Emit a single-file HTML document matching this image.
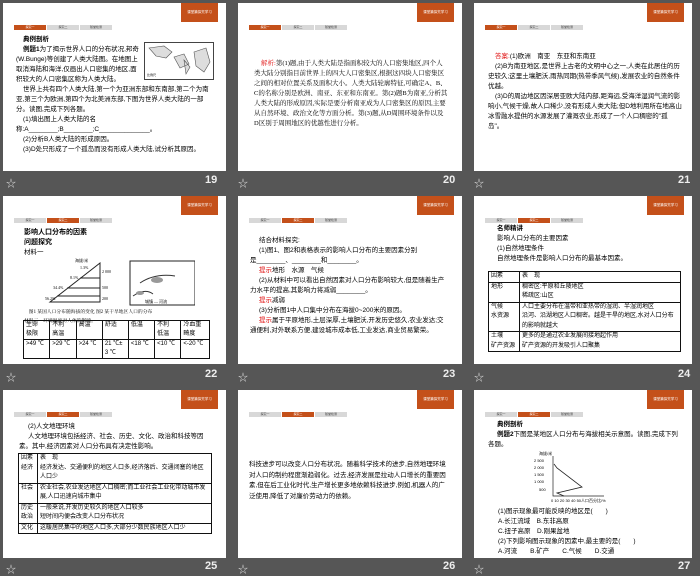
<!DOCTYPE html>
<html><head><meta charset="utf-8">
<style>
*{margin:0;padding:0;box-sizing:border-box}
body{width:700px;height:575px;background:#565656;overflow:hidden;position:relative;font-family:"Liberation Sans","Noto Sans CJK SC",sans-serif}
.s{position:absolute;background:#fff;height:168px;overflow:hidden;color:#000;font-size:6.5px;line-height:10px}
.tag{position:absolute;top:0;right:8px;width:37px;height:19px;background:#c4501a;color:#fff;font-size:3.5px;line-height:19px;text-align:center}
.tabs{position:absolute;top:22px;left:11px;height:5px;display:flex;gap:1px}
.tabs span{width:32px;height:5px;background:#d8d8d8;font-size:3px;line-height:5px;text-align:center;color:#444}
.tabs span.a{background:#c4501a;color:#fff}
.c{position:absolute;left:13px;right:10px}
.r{color:#e01010}
.b{font-weight:bold}
.lb{position:absolute;color:#eee;font-size:11px;font-weight:bold}
.st{position:absolute;color:#ddd;font-size:10px}
table{border-collapse:collapse;font-size:6px;line-height:9px}
td{border:0.8px solid #111;padding:0 2px;vertical-align:top}
table.o{border:1.6px solid #111}
</style></head><body>

<!-- Row 1 -->
<div class="s" style="left:3px;top:3px;width:223px">
<div class="tag">课堂篇探究学习</div>
<div class="tabs"><span class="a">探究一</span><span>探究二</span><span>随堂检测</span></div>
<div class="c" style="top:32px">
<div class="b" style="padding-left:7px">典例剖析</div>
<div style="width:125px;text-indent:7px"><b>例题1</b>为了揭示世界人口的分布状况,邦奇(W.Bunge)等创建了人类大陆图。在地图上取消海陆和海洋,仅画出人口密集的地区,面积较大的人口密集区称为人类大陆。</div>
<div style="text-indent:7px">世界上共有四个人类大陆,第一个为亚洲东部和东南部,第二个为南亚,第三个为欧洲,第四个为北美洲东部,下图为世界人类大陆的一部分。读图,完成下列各题。</div>
<div style="padding-left:7px">(1)填出图上人类大陆的名</div>
<div>称:A________;B________;C______________。</div>
<div style="padding-left:7px">(2)分析B人类大陆的形成原因。</div>
<div style="padding-left:7px">(3)D处只形成了一个孤岛而没有形成人类大陆,试分析其原因。</div>
</div>
<svg style="position:absolute;left:141px;top:39px" width="70" height="38"><rect x="0.5" y="0.5" width="69" height="37" fill="#fff" stroke="#444"/><path d="M5 6 L20 4 L28 10 L22 16 L12 14 Z M30 15 L40 12 L45 22 L36 26 Z M50 10 L62 6 L66 20 L60 30 L52 24 Z M40 18 L46 25 L42 32 Z" fill="#ddd" stroke="#555" stroke-width=".6"/><text x="3" y="34" font-size="3">比例尺</text></svg>
</div>

<div class="s" style="left:238px;top:3px;width:224px">
<div class="tag">课堂篇探究学习</div>
<div class="tabs"><span class="a">探究一</span><span>探究二</span><span>随堂检测</span></div>
<div class="c" style="top:56px;left:16px;right:14px;font-family:'Liberation Serif','Noto Serif CJK SC',serif">
<div style="text-indent:7px"><span class="r">解析:</span>第(1)题,由于人类大陆是指面积较大的人口密集地区,四个人类大陆分别指目前世界上的四大人口密集区,根据这四块人口密集区之间的相对位置关系及面积大小。人类大陆轮廓特征,可确定A、B、C的名称分别是欧洲、南亚、东亚和东南亚。第(2)题B为南亚,分析其人类大陆的形成原因,实际是要分析南亚成为人口密集区的原因,主要从自然环境、政治文化等方面分析。第(3)题,从D周围环境条件以及D区别于周围地区的优越性进行分析。</div>
</div>
</div>

<div class="s" style="left:474px;top:3px;width:218px">
<div class="tag">课堂篇探究学习</div>
<div class="tabs"><span class="a">探究一</span><span>探究二</span><span>随堂检测</span></div>
<div class="c" style="top:49px;left:14px">
<div style="padding-left:7px"><span class="r">答案:</span>(1)欧洲　南亚　东亚和东南亚</div>
<div style="text-indent:7px">(2)B为南亚地区,是世界上古老的文明中心之一,人类在此居住的历史较久;这里土壤肥沃,雨热同期(热带季风气候),发展农业的自然条件优越。</div>
<div style="text-indent:7px">(3)D的周边地区因深居亚欧大陆内部,距海远,受海洋湿润气流的影响小,气候干燥,故人口稀少,没有形成人类大陆;但D地利用所在地高山冰雪融水提供的水源发展了灌溉农业,形成了一个人口稠密的"孤岛"。</div>
</div>
</div>

<div class="st" style="left:6px;top:175px">☆</div><div class="lb" style="left:205px;top:174px">19</div>
<div class="st" style="left:238px;top:175px">☆</div><div class="lb" style="left:443px;top:174px">20</div>
<div class="st" style="left:474px;top:175px">☆</div><div class="lb" style="left:678px;top:174px">21</div>

<!-- Row 2 -->
<div class="s" style="left:3px;top:196px;width:223px">
<div class="tag">课堂篇探究学习</div>
<div class="tabs"><span>探究一</span><span class="a">探究二</span><span>随堂检测</span></div>
<div class="c" style="top:32px;left:21px">
<div class="b" style="font-size:7px">影响人口分布的因素</div>
<div class="b" style="font-size:7px">问题探究</div>
<div>材料一</div>
</div>
<svg style="position:absolute;left:42px;top:62px" width="150" height="55" font-size="4" font-family="Liberation Serif"><path d="M5 44 L55 5 L55 44 Z" fill="none" stroke="#222"/><path d="M35 20 H55 M22 30 H55 M12 38 H55" stroke="#222" fill="none"/><text x="30" y="4">海拔/米</text><text x="35" y="11">1.3%</text><text x="25" y="21">8.1%</text><text x="8" y="31">34.4%</text><text x="0" y="42">56.2%</text><text x="57" y="15">2 000</text><text x="57" y="31">500</text><text x="57" y="42">200</text>
<rect x="85" y="3" width="65" height="44" fill="none" stroke="#222"/><path d="M95 25 Q110 15 130 18 M88 38 Q100 30 108 36" stroke="#333" fill="none"/><ellipse cx="112" cy="22" rx="6" ry="3" fill="#999"/><ellipse cx="95" cy="35" rx="4" ry="2" fill="#999"/><text x="100" y="45">城镇 — 河流</text></svg>
<div class="c" style="top:112px;left:21px;font-size:4.8px;line-height:9px;font-family:'Liberation Serif','Noto Serif CJK SC',serif">　图1 某国人口分布随海拔的变化 图2 某干旱地区人口的分布<br>材料二　环境温度对人体的影响。</div>
<table class="o" style="position:absolute;left:20px;top:124px;width:187px"><tr><td>生命<br>极限</td><td>不利<br>高温</td><td>高温</td><td>舒适</td><td>低温</td><td>不利<br>低温</td><td>冷血重<br>畸度</td></tr><tr><td>&gt;49 ℃</td><td>&gt;29 ℃</td><td>&gt;24 ℃</td><td>21 ℃±<br>3 ℃</td><td>&lt;18 ℃</td><td>&lt;10 ℃</td><td>&lt;-20 ℃</td></tr></table>
</div>

<div class="s" style="left:238px;top:196px;width:224px">
<div class="tag">课堂篇探究学习</div>
<div class="tabs"><span>探究一</span><span class="a">探究二</span><span>随堂检测</span></div>
<div class="c" style="top:40px;left:12px;right:12px">
<div style="padding-left:9px">结合材料探究:</div>
<div style="padding-left:9px">(1)图1、图2和表格表示的影响人口分布的主要因素分别</div>
<div>是________、________和________。</div>
<div style="padding-left:9px"><span class="r">提示</span>地形　水源　气候</div>
<div style="text-indent:9px">(2)从材料中可以看出自然因素对人口分布影响较大,但是随着生产力水平的提高,其影响力将减弱________。</div>
<div style="padding-left:9px"><span class="r">提示</span>减弱</div>
<div style="padding-left:9px">(3)分析图1中人口集中分布在海拔0~200米的原因。</div>
<div style="text-indent:9px"><span class="r">提示</span>属于平原地形,土层深厚,土壤肥沃,开发历史悠久,农业发达;交通便利,对外联系方便,建设城市成本低,工业发达,商业贸易繁荣。</div>
</div>
</div>

<div class="s" style="left:474px;top:196px;width:218px">
<div class="tag">课堂篇探究学习</div>
<div class="tabs"><span>探究一</span><span class="a">探究二</span><span>随堂检测</span></div>
<div class="c" style="top:28px;left:23px">
<div class="b">名师精讲</div>
<div>影响人口分布的主要因素</div>
<div>(1)自然地理条件</div>
<div>自然地理条件是影响人口分布的最基本因素。</div>
</div>
<table class="o" style="position:absolute;left:14px;top:75px;width:193px;line-height:9.5px"><tr><td style="width:31px">因素</td><td>表　现</td></tr><tr><td>地形</td><td>稠密区:平原和丘陵地区<br>稀疏区:山区</td></tr><tr><td>气候<br>水资源</td><td>人口主要分布在温带和亚热带的湿润、半湿润地区<br>沿河、沿湖地区人口稠密。越是干旱的地区,水对人口分布的影响就越大</td></tr><tr><td>土壤<br>矿产资源</td><td>更多的是通过农业发展间接地起作用<br>矿产资源的开发吸引人口聚集</td></tr></table>
</div>

<div class="st" style="left:6px;top:369px">☆</div><div class="lb" style="left:205px;top:368px">22</div>
<div class="st" style="left:238px;top:369px">☆</div><div class="lb" style="left:443px;top:368px">23</div>
<div class="st" style="left:474px;top:369px">☆</div><div class="lb" style="left:678px;top:368px">24</div>

<!-- Row 3 -->
<div class="s" style="left:3px;top:390px;width:223px">
<div class="tag">课堂篇探究学习</div>
<div class="tabs"><span>探究一</span><span class="a">探究二</span><span>随堂检测</span></div>
<div class="c" style="top:32px;left:16px">
<div style="padding-left:9px">(2)人文地理环境</div>
<div style="text-indent:9px">人文地理环境包括经济、社会、历史、文化、政治和科技等因素。其中,经济因素对人口分布具有决定性影响。</div>
</div>
<table class="o" style="position:absolute;left:15px;top:63px;width:194px;line-height:9.5px"><tr><td style="width:19px">因素<br>经济</td><td>表　现<br>经济发达、交通便利的地区人口多,经济落后、交通闭塞的地区人口少</td></tr><tr><td>社会</td><td>农业社会,农业发达地区人口稠密;而工业社会工业化带动城市发展,人口迅速向城市集中</td></tr><tr><td>历史<br>政治</td><td>一般来说,开发历史较久的地区人口较多<br>短时间内便会改变人口分布状况</td></tr><tr><td>文化</td><td>这暖居民集中的地区人口多,大部分少数民族地区人口少</td></tr></table>
</div>

<div class="s" style="left:238px;top:390px;width:224px">
<div class="tag">课堂篇探究学习</div>
<div class="tabs"><span>探究一</span><span class="a">探究二</span><span>随堂检测</span></div>
<div class="c" style="top:70px;left:11px;right:12px;line-height:10.5px">
<div>科技进步可以改变人口分布状况。随着科学技术的进步,自然地理环境对人口的制约程度渐趋弱化。过去,经济发展是拉动人口增长的重要因素,但在后工业化时代,生产增长更多地依赖科技进步,例如,机器人的广泛使用,降低了对廉价劳动力的依赖。</div>
</div>
</div>

<div class="s" style="left:474px;top:390px;width:218px">
<div class="tag">课堂篇探究学习</div>
<div class="tabs"><span>探究一</span><span class="a">探究二</span><span>随堂检测</span></div>
<div class="c" style="top:30px;left:14px">
<div class="b" style="padding-left:9px">典例剖析</div>
<div style="text-indent:9px"><b>例题2</b>下图是某地区人口分布与海拔相关示意图。读图,完成下列各题。</div>
</div>
<svg style="position:absolute;left:60px;top:61px" width="100" height="53" font-size="4"><text x="5" y="4">海拔/米</text><path d="M19 5 V45 H70" stroke="#222" fill="none" stroke-width=".7"/><path d="M20 13 L23 17 L48 36 L23 42 L30 45" stroke="#222" fill="none" stroke-width=".8"/><text x="0" y="11">2 500</text><text x="0" y="18">2 000</text><text x="0" y="25">1 500</text><text x="0" y="32">1 000</text><text x="5" y="40">500</text><text x="17" y="51">0 10 20 30 40 50人口百分比/%</text></svg>
<div class="c" style="top:117px;left:24px">
<div>(1)图示现象最可能反映的地区是(　　)</div>
<div>A.长江流域　B.东非高原</div>
<div>C.扭子高原　D.刚果盆地</div>
<div>(2)下列影响图示现象的因素中,最主要的是(　　)</div>
<div>A.河流　　B.矿产　　C.气候　　D.交通</div>
</div>
</div>

<div class="st" style="left:6px;top:561px">☆</div><div class="lb" style="left:205px;top:560px">25</div>
<div class="st" style="left:238px;top:561px">☆</div><div class="lb" style="left:443px;top:560px">26</div>
<div class="st" style="left:474px;top:561px">☆</div><div class="lb" style="left:678px;top:560px">27</div>
</body></html>
